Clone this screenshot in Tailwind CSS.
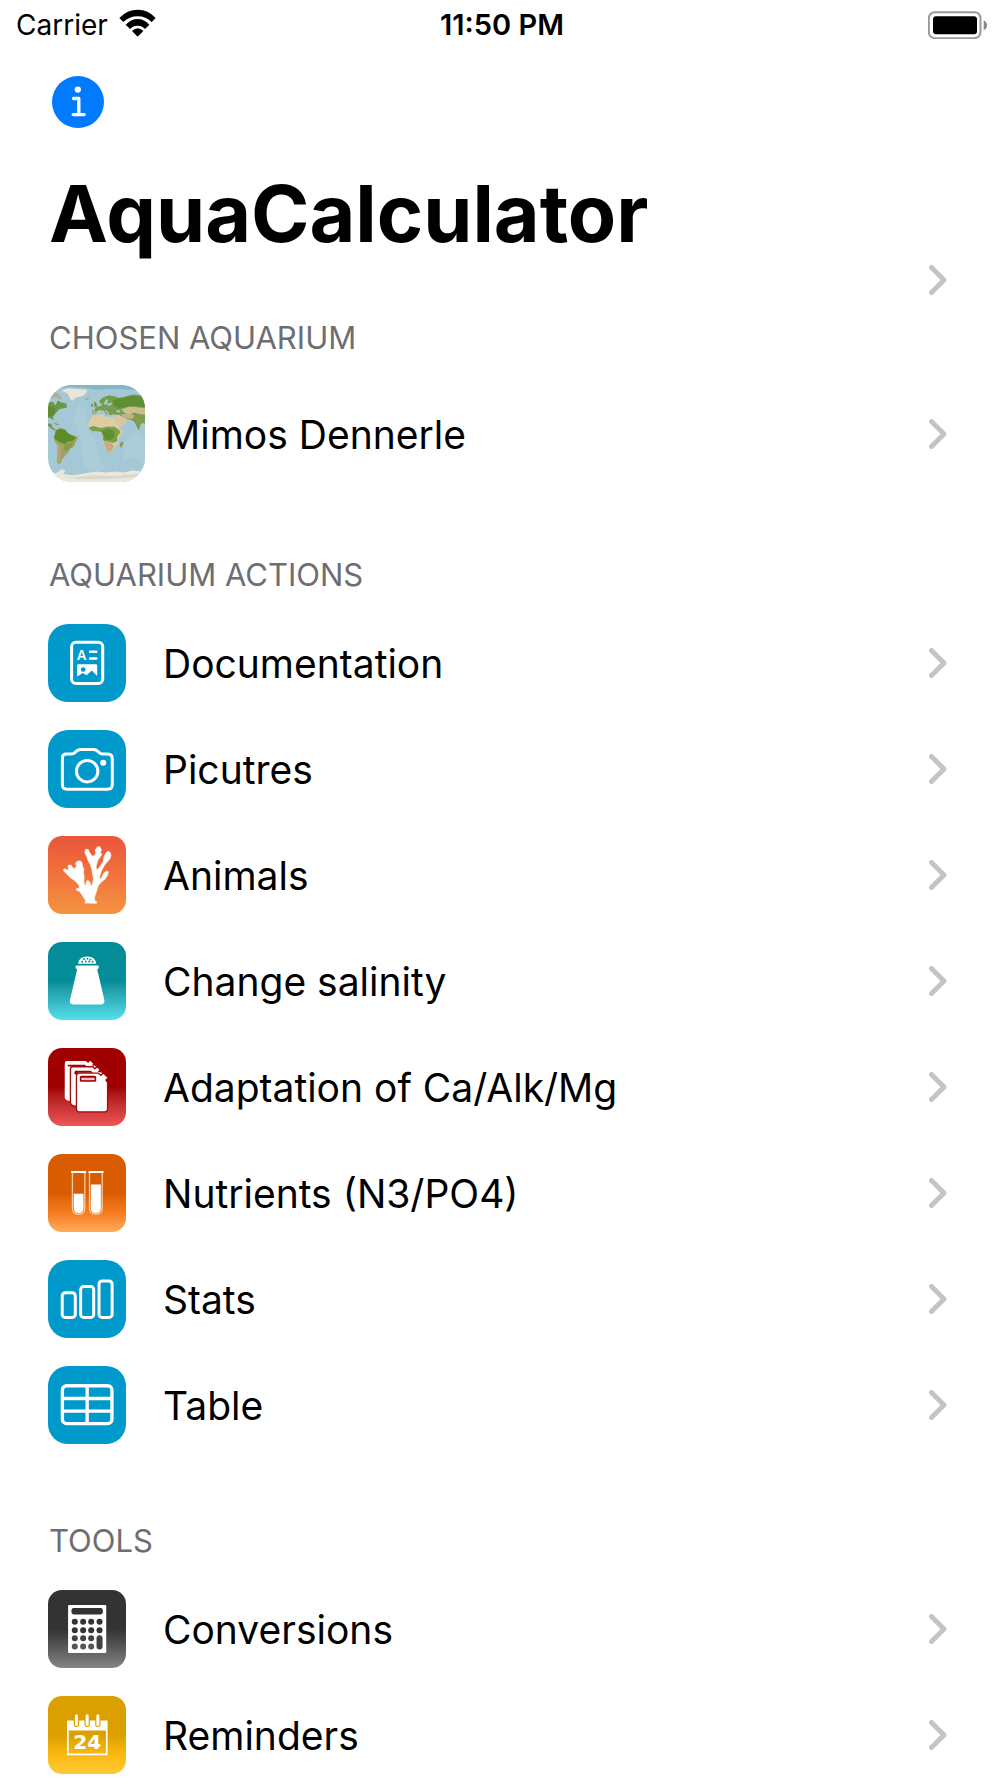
<!DOCTYPE html>
<html lang="en">
<head>
    <meta charset="UTF-8">
    <meta name="viewport" content="width=device-width, initial-scale=1.0">
    <title>AquaCalculator</title>
    <!-- Tailwind CSS -->
    <script src="https://cdn.jsdelivr.net/npm/@tailwindcss/browser@4"></script>
</head>
<body class="bg-white min-h-screen overflow-x-hidden font-['Inter','Liberation_Sans',sans-serif] text-black">
    <!-- Shared chevron -->
    <svg class="hidden">
        <symbol id="chevron" viewBox="0 0 18 30">
            <path d="M2.5 2.5 L15 15 L2.5 27.5" fill="none" stroke="#c4c4c6" stroke-width="5" stroke-linecap="round" stroke-linejoin="round"/>
        </symbol>
    </svg>

    <!-- Status Bar -->
    <div class="grid grid-cols-3 items-center h-[50px] pl-4 pr-3">
        <div class="flex items-center gap-[11px] text-[28px]">
            <span>Carrier</span>
            <svg class="w-[37px] h-[28px] mb-1" viewBox="360 28 111 84">
                <path d="M361 55 Q384 30 416 30 Q448 30 470 55 L458 67 Q441 50 416 50 Q391 50 373 67 Z"/>
                <path d="M380 75 Q396 58 416 58 Q436 58 451 75 L438 88 Q430 78 416 78 Q402 78 393 88 Z"/>
                <path d="M399 94 Q407 86 416 86 Q425 86 433 94 L416 111 Z"/>
            </svg>
        </div>
        <div class="text-center text-[29px] font-semibold">11:50 PM</div>
        <svg class="justify-self-end w-[60px] h-[28px]" viewBox="84 29 180 84">
            <rect x="86.500" y="32.500" width="155" height="78" rx="18" fill="none" stroke="#999" stroke-width="6"/>
            <rect x="99" y="45" width="132" height="54" rx="9"/>
            <path d="M251 57 Q261 62 261 72 Q261 82 251 87 Z" fill="#888"/>
        </svg>
    </div>

    <!-- Header -->
    <header class="pl-[49px] pr-[53px] pt-[26px]">
        <button type="button" aria-label="Info" class="block w-[55px] h-[52px] pl-[3px] cursor-pointer">
            <svg class="w-[52px] h-[52px]" viewBox="155 227 157 157">
                <circle cx="233.500" cy="305.500" r="78.500" fill="#007aff"/>
                <circle cx="233" cy="268" r="9.500" fill="#fff"/>
                <path d="M220 295 H236 V343 M219 343.500 H252" fill="none" stroke="#fff" stroke-width="10" stroke-linecap="round" stroke-linejoin="round"/>
            </svg>
        </button>
        <h1 class="mt-[37px] text-[79px] leading-[96px] font-bold">AquaCalculator</h1>
        <a href="#" aria-label="Open" class="flex justify-end mt-[4px]">
            <svg class="w-[18px] h-[30px]"><use href="#chevron"/></svg>
        </a>
    </header>

    <main class="pl-12 pr-[53px]">
        <!-- Chosen Aquarium -->
        <section>
            <h2 class="mt-[23px] pl-px text-[31px] leading-[40px] text-[#6d6d72]">CHOSEN AQUARIUM</h2>
            <a href="#" class="flex items-center mt-[27px] h-[97px]">
                <svg class="w-[97px] h-[97px] rounded-[24px] mr-5" viewBox="24 30 291 288" preserveAspectRatio="none">
                    <rect x="24" y="30" width="291" height="288" fill="#a5c8d6"/>
                    <path d="M24 30 H315 V48 Q240 38 170 44 Q100 30 24 44 Z" fill="#86b5c8"/>
                    <path d="M118 90 Q100 110 102 140 Q120 170 128 210 Q120 250 140 280 L200 285 Q170 240 165 190 Q130 160 140 110 Z" fill="#abcdd9"/>
                    <path d="M250 200 Q280 170 300 180 L315 200 V270 Q280 230 250 260 Z" fill="#abcdd9"/>
                    <!-- Greenland and Iceland -->
                    <path d="M64 46 L86 40 L112 42 L142 44 L138 56 L124 64 L108 67 L98 76 L92 73 L86 60 L78 52 Z" fill="#e9e5db"/>
                    <path d="M134 69 L146 68 L146 73 L137 74 Z" fill="#a9a983"/>
                    <!-- North America -->
                    <path d="M30 55 L42 50 L58 58 L66 70 L60 74 L48 66 L36 70 L26 68 Z" fill="#b0ae94"/>
                    <path d="M24 82 L38 80 L46 90 L54 76 L64 82 L78 84 L82 96 L68 100 L58 102 L50 110 L44 118 L38 126 L42 134 L36 132 L30 127 L24 128 Z" fill="#6f9548"/>
                    <path d="M24 92 L40 95 L48 104 L38 120 L24 124 Z" fill="#5f8c31"/>
                    <path d="M24 144 L34 145 L38 156 L48 162 L43 164 L32 158 L24 150 Z" fill="#7a9248"/>
                    <path d="M40 143 L52 145 L60 149 L48 148 Z" fill="#779151"/>
                    <!-- South America -->
                    <path d="M47 163 L60 157 L76 162 L84 172 L94 178 L112 183 L113 190 L106 200 L103 212 L92 218 L84 232 L76 238 L72 246 L66 250 L62 264 L54 263 L50 254 L53 230 L54 212 L44 197 L40 184 L45 176 Z" fill="#a0a45b"/>
                    <path d="M48 165 L62 160 L76 164 L84 174 L96 180 L108 186 L98 196 L84 198 L74 206 L60 200 L46 192 L43 184 Z" fill="#5b8c29"/>
                    <path d="M74 206 L102 200 L94 214 L80 226 L72 222 Z" fill="#7f9b50"/>
                    <path d="M53 206 L61 212 L63 236 L58 258 L51 255 Z" fill="#b7a17d"/>
                    <!-- Europe and Asia -->
                    <path d="M178 76 L190 66 L206 61 L222 63 L236 68 L250 66 L264 62 L278 58 L296 60 L315 62 V144 L306 142 L300 150 L298 164 L292 158 L284 140 L274 134 L262 132 L250 122 L240 124 L226 120 L220 116 L212 120 L206 112 L198 106 L190 106 L178 104 L170 108 L168 116 L158 116 L157 106 L166 104 L164 98 L172 94 L182 92 L188 86 L180 84 Z" fill="#779c4c"/>
                    <path d="M192 84 L198 72 L204 74 L202 86 L196 90 Z M202 86 L214 82 L216 88 L204 92 Z" fill="#a5c8d6"/>
                    <path d="M218 74 L250 68 L280 62 L315 66 V96 L286 92 L262 96 L240 98 L222 92 Z" fill="#5f8f33"/>
                    <path d="M244 102 L268 94 L292 96 L315 98 V118 L296 116 L282 112 L270 118 L252 112 Z" fill="#cbbd8c"/>
                    <path d="M242 118 L262 114 L284 120 L278 130 L264 130 L248 124 Z" fill="#c9b07e"/>
                    <path d="M282 120 L300 118 L315 130 V142 L302 144 L296 154 L288 140 Z" fill="#829d51"/>
                    <path d="M230 104 L242 106 L240 112 L228 110 Z M254 102 L260 106 L260 116 L255 112 Z" fill="#a5c8d6"/>
                    <path d="M160 80 L168 82 L172 92 L162 95 L164 87 Z M153 88 L160 87 L158 94 L152 94 Z" fill="#67923f"/>
                    <path d="M190 106 L196 108 L204 116 L202 119 L194 112 Z M204 110 L210 113 L212 119 L207 118 Z" fill="#8b9b5a"/>
                    <path d="M158 106 L170 108 L168 117 L158 117 Z" fill="#b0a772"/>
                    <!-- Africa and Arabia -->
                    <path d="M160 120 L188 116 L192 122 L206 126 L222 124 L228 136 L236 152 L244 164 L252 164 L246 176 L236 186 L234 204 L226 210 L220 224 L206 230 L198 226 L193 206 L188 196 L190 186 L184 172 L170 168 L156 168 L146 158 L144 148 L150 132 Z" fill="#dfcda2"/>
                    <path d="M146 156 L160 152 L182 158 L200 154 L224 154 L236 162 L242 170 L232 182 L232 196 L220 202 L204 198 L192 198 L188 192 L190 184 L184 170 L170 167 L156 167 Z" fill="#7d9f49"/>
                    <path d="M186 166 L204 160 L222 166 L224 184 L212 194 L194 192 Z" fill="#5f9030"/>
                    <path d="M192 200 L212 200 L222 210 L216 224 L206 229 L199 224 Z" fill="#c9aa7b"/>
                    <path d="M222 118 L238 118 L250 130 L262 136 L256 146 L240 154 L234 144 Z" fill="#dec69b"/>
                    <path d="M240 202 L248 196 L250 204 L244 216 L239 213 Z" fill="#8b9960"/>
                    <!-- Antarctica -->
                    <path d="M24 288 L48 292 L64 280 L76 284 L70 294 L98 298 L124 294 L150 290 L172 287 L196 290 L226 287 L252 290 L276 284 L298 286 L315 284 V318 H24 Z" fill="#eae7db"/>
                    <path d="M60 300 L100 304 L160 298 L220 300 L290 294 L315 298 V302 L220 308 L120 310 Z" fill="#dad8cb"/>
                </svg>
                <span class="flex-1 mt-0.5 text-[39px] leading-[48px]">Mimos Dennerle</span>
                <svg class="w-[18px] h-[30px]"><use href="#chevron"/></svg>
            </a>
        </section>

        <!-- Aquarium Actions -->
        <section>
            <h2 class="mt-[73px] pl-px text-[31px] leading-[40px] text-[#6d6d72]">AQUARIUM ACTIONS</h2>
            <ul class="mt-[15px]">
                <li>
                    <a href="#" class="flex items-center h-[106px]">
                        <svg class="w-[78px] h-[78px] rounded-[20px] bg-[#0099cc] mr-[37px]" viewBox="24 27 233 233">
                            <rect x="94.500" y="81.500" width="93" height="123" rx="13" fill="none" stroke="#fff" stroke-width="9"/>
                            <text x="110" y="135" font-size="40" font-weight="600" fill="#fff">A</text>
                            <path d="M150 110 H168 M150 130 H168" stroke="#fff" stroke-width="8" stroke-linecap="round"/>
                            <path fill-rule="evenodd" d="M115 147 H167 Q171 147 171 151 V182 L155 166 L139 180 L128 173 L111 184 V151 Q111 147 115 147 Z M129 156 A7 7 0 1 0 129 170 A7 7 0 1 0 129 156 Z" fill="#fff"/>
                        </svg>
                        <span class="flex-1 mt-0.5 text-[39px] leading-[48px]">Documentation</span>
                        <svg class="w-[18px] h-[30px]"><use href="#chevron"/></svg>
                    </a>
                </li>
                <li>
                    <a href="#" class="flex items-center h-[106px]">
                        <svg class="w-[78px] h-[78px] rounded-[20px] bg-[#0099cc] mr-[37px]" viewBox="24 345 233 233">
                            <path d="M79 417 H94 Q100 417 105 412 L108 409 Q114 403 121 403 H160 Q167 403 173 409 L176 412 Q181 417 187 417 H202 Q216 417 216 431 V508 Q216 522 202 522 H81 Q67 522 67 508 V429 Q67 417 79 417 Z" fill="none" stroke="#fff" stroke-width="9"/>
                            <circle cx="141" cy="468" r="32" fill="none" stroke="#fff" stroke-width="9"/>
                            <circle cx="189" cy="443" r="9" fill="#fff"/>
                        </svg>
                        <span class="flex-1 mt-0.5 text-[39px] leading-[48px]">Picutres</span>
                        <svg class="w-[18px] h-[30px]"><use href="#chevron"/></svg>
                    </a>
                </li>
                <li>
                    <a href="#" class="flex items-center h-[106px]">
                        <svg class="w-[78px] h-[78px] rounded-[14px] bg-linear-to-b from-[#ea543b] via-[#f0733d] to-[#f59341] mr-[37px]" viewBox="24 25 233 233">
                            <path d="M134 225 L137 219 L127 203 L118 190 L109 187 L110 182 L118 182 L117 172 L104 158 L91 150 L78 136 L70 129 L72 123 L79 125 L88 129 L84 119 L86 112 L93 112 L99 122 L105 121 L109 115 L107 106 L112 100 L121 100 L126 106 L127 116 L131 122 L130 134 L132 150 L131 165 L137 176 L138 163 L143 157 L150 165 L153 178 L158 166 L160 151 L157 138 L155 124 L150 110 L144 98 L140 86 L134 75 L136 65 L144 65 L149 76 L156 85 L164 84 L167 75 L165 67 L172 57 L179 57 L183 66 L181 76 L185 80 L180 87 L173 97 L168 113 L168 125 L176 123 L182 112 L189 102 L192 85 L200 72 L208 72 L212 82 L209 93 L201 102 L193 112 L184 128 L179 143 L177 154 L184 151 L189 138 L198 130 L204 132 L202 142 L194 154 L184 162 L174 173 L169 190 L163 207 L163 218 L170 222 L169 226 Z" fill="#fff" stroke="#fff" stroke-width="2"/>
                        </svg>
                        <span class="flex-1 mt-0.5 text-[39px] leading-[48px]">Animals</span>
                        <svg class="w-[18px] h-[30px]"><use href="#chevron"/></svg>
                    </a>
                </li>
                <li>
                    <a href="#" class="flex items-center h-[106px]">
                        <svg class="w-[78px] h-[78px] rounded-[14px] bg-linear-to-b from-[#048d99] from-50% to-[#55dfea] mr-[37px]" viewBox="24 345 233 233">
                            <path d="M114 410 Q116 388 141 388 Q166 388 168 410 Z" fill="#fff"/>
                            <g fill="#048d99">
                                <circle cx="132" cy="396" r="3"/><circle cx="142" cy="395" r="3"/><circle cx="151" cy="397" r="3"/>
                                <circle cx="126" cy="404" r="3"/><circle cx="137" cy="403" r="3"/><circle cx="147" cy="403" r="3"/><circle cx="157" cy="404" r="3"/>
                            </g>
                            <path d="M110 415 H172 Q176 415 176 419 Q176 426 171 427 L192 517 Q195 532 181 532 H101 Q87 532 90 517 L111 427 Q106 426 106 419 Q106 415 110 415 Z" fill="#fff"/>
                        </svg>
                        <span class="flex-1 mt-0.5 text-[39px] leading-[48px]">Change salinity</span>
                        <svg class="w-[18px] h-[30px]"><use href="#chevron"/></svg>
                    </a>
                </li>
                <li>
                    <a href="#" class="flex items-center h-[106px]">
                        <svg class="w-[78px] h-[78px] rounded-[14px] bg-linear-to-b from-[#a00000] from-50% to-[#f05458] mr-[37px]" viewBox="24 27 233 233">
                            <path d="M80 66 H137 L144 72 L150 65 L159 74 L155 79 L165 80 L168 87 L157 90 L148 86 H92 V184 Q76 186 74 175 V76 Q74 66 80 66 Z" fill="#fff"/>
                            <path d="M83 77 H134 L138 80 V82 H83 Z" fill="#a00000"/>
                            <path d="M98 83 H158 L164 89 L171 83 L180 92 L176 97 L186 98 L187 107 H111 V201 Q93 202 91 190 V91 Q91 83 98 83 Z" fill="#fff" stroke="#a30b0e" stroke-width="4"/>
                            <path d="M105 95 H152 L159 101 H113 L106 107 L102 103 Z" fill="#a00000"/>
                            <path d="M119 102 H174 L182 109 L189 102 L204 116 L197 123 L202 130 V209 Q202 218 193 218 H119 Q109 218 109 209 V112 Q109 102 119 102 Z" fill="#fff" stroke="#a30b0e" stroke-width="4"/>
                            <rect x="119" y="110" width="49" height="18" rx="5" fill="#a00000"/>
                            <rect x="124" y="116" width="39" height="7" fill="#fff"/>
                            <rect x="127" y="118" width="33" height="3" fill="#d98080"/>
                        </svg>
                        <span class="flex-1 mt-0.5 text-[39px] leading-[48px]">Adaptation of Ca/Alk/Mg</span>
                        <svg class="w-[18px] h-[30px]"><use href="#chevron"/></svg>
                    </a>
                </li>
                <li>
                    <a href="#" class="flex items-center h-[106px]">
                        <svg class="w-[78px] h-[78px] rounded-[14px] bg-linear-to-b from-[#da5c00] from-50% via-[#f57c1e] via-75% to-[#ffab58] mr-[37px]" viewBox="24 346 233 233">
                            <path d="M97 403 V508 Q97 526 115 526 Q134 526 134 508 V403 M148 403 V508 Q148 526 167 526 Q186 526 186 508 V403" fill="none" stroke="#f6c9a2" stroke-width="4"/>
                            <path d="M93 400 H138 M145 400 H190" stroke="#fff" stroke-width="6"/>
                            <path d="M101 465 H130 V508 Q130 522 115 522 Q101 522 101 508 Z M152 437 H182 V508 Q182 522 167 522 Q152 522 152 508 Z" fill="#fff"/>
                        </svg>
                        <span class="flex-1 mt-0.5 text-[39px] leading-[48px]">Nutrients (N3/PO4)</span>
                        <svg class="w-[18px] h-[30px]"><use href="#chevron"/></svg>
                    </a>
                </li>
                <li>
                    <a href="#" class="flex items-center h-[106px]">
                        <svg class="w-[78px] h-[78px] rounded-[20px] bg-[#0099cc] mr-[37px]" viewBox="24 20 233 233">
                            <g fill="none" stroke="#fff" stroke-width="9">
                                <rect x="66.500" y="117.500" width="39" height="74" rx="9"/>
                                <rect x="121.500" y="99.500" width="39" height="92" rx="9"/>
                                <rect x="176.500" y="82.500" width="39" height="109" rx="9"/>
                            </g>
                        </svg>
                        <span class="flex-1 mt-0.5 text-[39px] leading-[48px]">Stats</span>
                        <svg class="w-[18px] h-[30px]"><use href="#chevron"/></svg>
                    </a>
                </li>
                <li>
                    <a href="#" class="flex items-center h-[106px]">
                        <svg class="w-[78px] h-[78px] rounded-[20px] bg-[#0099cc] mr-[37px]" viewBox="24 339 233 233">
                            <rect x="67" y="398" width="148" height="113" rx="13" fill="none" stroke="#fff" stroke-width="10"/>
                            <path d="M67 436 H215 M67 474 H215 M141 398 V511" stroke="#fff" stroke-width="10"/>
                        </svg>
                        <span class="flex-1 mt-0.5 text-[39px] leading-[48px]">Table</span>
                        <svg class="w-[18px] h-[30px]"><use href="#chevron"/></svg>
                    </a>
                </li>
            </ul>
        </section>

        <!-- Tools -->
        <section>
            <h2 class="mt-[63px] pl-px text-[31px] leading-[40px] text-[#6d6d72]">TOOLS</h2>
            <ul class="mt-[15px]">
                <li>
                    <a href="#" class="flex items-center h-[106px]">
                        <svg class="w-[78px] h-[78px] rounded-[14px] bg-linear-to-b from-[#333333] from-50% to-[#858585] mr-[37px]" viewBox="24 30 233 233">
                            <rect x="84" y="75" width="114" height="143" rx="3" fill="#fff"/>
                            <rect x="94" y="84" width="94" height="19" rx="7" fill="#333"/>
                            <g fill="#333">
                                <circle cx="104" cy="125" r="9"/><circle cx="129" cy="125" r="9"/><circle cx="153" cy="125" r="9"/><circle cx="178" cy="125" r="9"/>
                                <circle cx="104" cy="150" r="9"/><circle cx="129" cy="150" r="9"/><circle cx="153" cy="150" r="9"/><circle cx="178" cy="150" r="9"/>
                            </g>
                            <g fill="#424242">
                                <circle cx="104" cy="174" r="9"/><circle cx="129" cy="174" r="9"/><circle cx="153" cy="174" r="9"/>
                                <rect x="169" y="165" width="18" height="43" rx="9"/>
                            </g>
                            <g fill="#555">
                                <circle cx="104" cy="199" r="9"/><circle cx="129" cy="199" r="9"/><circle cx="153" cy="199" r="9"/>
                            </g>
                        </svg>
                        <span class="flex-1 mt-0.5 text-[39px] leading-[48px]">Conversions</span>
                        <svg class="w-[18px] h-[30px]"><use href="#chevron"/></svg>
                    </a>
                </li>
                <li>
                    <a href="#" class="flex items-center h-[106px]">
                        <svg class="w-[78px] h-[78px] rounded-[14px] bg-linear-to-b from-[#dba000] from-50% via-[#fbb90e] via-75% to-[#ffc933] mr-[37px]" viewBox="24 350 233 233">
                            <path d="M81 423 H101 V437 Q101 443 109 443 Q117 443 117 437 V423 H133 V437 Q133 443 141 443 Q149 443 149 437 V423 H165 V437 Q165 443 173 443 Q181 443 181 437 V423 H202 V527 H81 Z M86 453 V522 H197 V453 Z" fill="#fff" fill-rule="evenodd"/>
                            <path d="M109 409 V435 M141 409 V435 M173 409 V435" stroke="#fff" stroke-width="9" stroke-linecap="round"/>
                            <text x="141" y="509" text-anchor="middle" font-family="DejaVu Sans" font-size="60" font-weight="700" fill="#fff">24</text>
                        </svg>
                        <span class="flex-1 mt-0.5 text-[39px] leading-[48px]">Reminders</span>
                        <svg class="w-[18px] h-[30px]"><use href="#chevron"/></svg>
                    </a>
                </li>
            </ul>
        </section>
    </main>
</body>
</html>
